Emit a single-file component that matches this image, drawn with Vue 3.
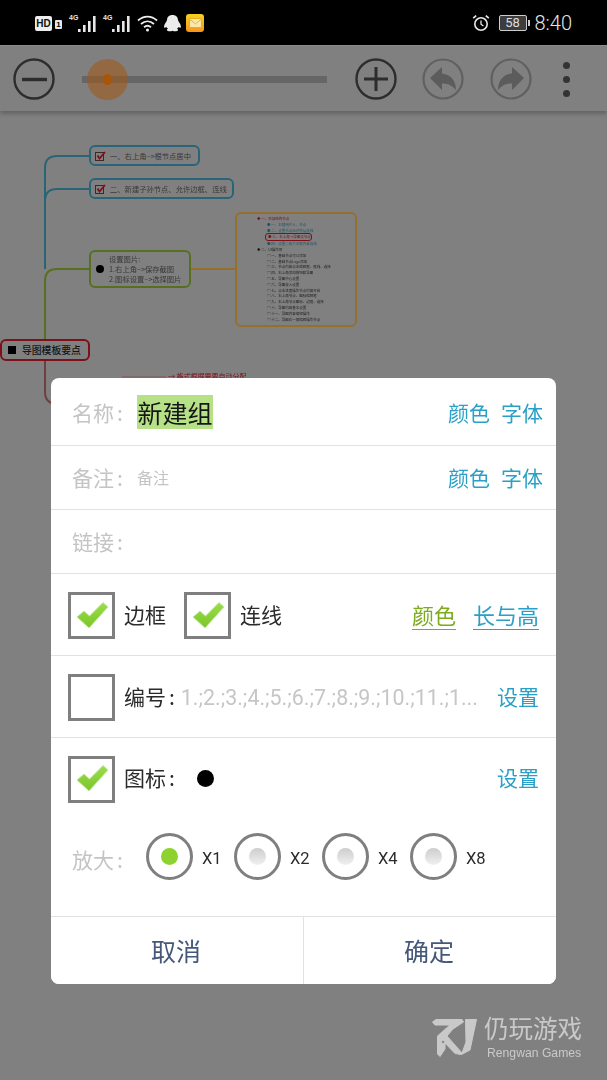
<template>
  <div class="screen">
    <div class="statusbar">
      <div class="status-left">
        <span class="hd">HD</span>
        <span class="sim">1</span>
        <span v-for="n in 2" :key="n" class="signal">
          <i class="net">4G</i>
          <svg width="20" height="16" viewBox="0 0 20 16" fill="#e8e8e8">
            <rect x="0" y="13" width="2.6" height="3" />
            <rect x="5" y="9" width="2.6" height="7" />
            <rect x="10" y="5" width="2.6" height="11" />
            <rect x="15" y="0" width="2.6" height="16" />
          </svg>
        </span>
        <svg class="wifi" width="21" height="18" viewBox="0 0 21 18" fill="none" stroke="#eee" stroke-width="1.8">
          <path d="M1 6.5C6.5 1.2 14.5 1.2 20 6.5" />
          <path d="M4 10C8 6.5 13 6.5 17 10" />
          <path d="M7 13.2C9 11.6 12 11.6 14 13.2" />
          <circle cx="10.5" cy="16" r="1.5" fill="#eee" stroke="none" />
        </svg>
        <svg class="qq" width="19" height="17" viewBox="0 0 15 19" preserveAspectRatio="none" fill="#ececec">
          <path d="M7.5 0C4.6 0 3.3 2.4 3.2 5.4C3.1 7.5 1 10 .8 13C.7 14.5 1.6 14.6 2.6 13.4C3 14.4 3.4 15 4 15.5C2.8 16 2.6 18 4.6 18.2C6 18.3 6.9 17.8 7.5 17.5C8.1 17.8 9 18.3 10.4 18.2C12.4 18 12.2 16 11 15.5C11.6 15 12 14.4 12.4 13.4C13.4 14.6 14.3 14.5 14.2 13C14 10 11.9 7.5 11.8 5.4C11.7 2.4 10.4 0 7.5 0Z" />
        </svg>
        <span class="mail">
          <svg width="13" height="10" viewBox="0 0 14 11" fill="#fbe9a8" stroke="#e9a21e" stroke-width=".9">
            <rect x=".5" y=".5" width="13" height="10" rx="1" />
            <path d="M1 1.5L7 6.5L13 1.5" fill="none" />
          </svg>
        </span>
      </div>
      <div class="status-right">
        <svg width="18" height="18" viewBox="0 0 18 18" fill="none" stroke="#e8e8e8" stroke-width="1.6">
          <circle cx="9" cy="10" r="6.2" />
          <path d="M9 6.5V10.2L11.4 12" stroke-width="1.3" />
          <path d="M1.2 4.2L4.2 1.6M16.8 4.2L13.8 1.6" />
        </svg>
        <span class="battery">58</span>
        <span class="battery-tip"></span>
        <span class="clock">8:40</span>
      </div>
    </div>

    <div class="toolbar">
      <svg class="round-btn" width="42" height="42" viewBox="0 0 42 42" fill="none" stroke="#2d2d2d" stroke-width="2.4">
        <circle cx="21" cy="21" r="19.5" />
        <path d="M9 21.5H34" stroke-width="3.4" />
      </svg>
      <div class="slider">
        <span class="thumb"><span class="thumb-dot"></span></span>
      </div>
      <svg class="round-btn" width="42" height="42" viewBox="0 0 42 42" fill="none" stroke="#2d2d2d" stroke-width="2.4">
        <circle cx="21" cy="21" r="19.5" />
        <path d="M9 21H33M21 9V33" stroke-width="3" />
      </svg>
      <svg class="round-btn undo" width="42" height="42" viewBox="0 0 42 42">
        <circle cx="21" cy="21" r="19.5" fill="none" stroke="#606060" stroke-width="2.2" />
        <path d="M8 20L20 9V15.5C29 16.5 34 23 34 32C30 27.5 26 25.5 20 25.5V32Z" fill="#5c5c5c" />
      </svg>
      <svg class="round-btn redo" width="42" height="42" viewBox="0 0 42 42">
        <circle cx="21" cy="21" r="19.5" fill="none" stroke="#606060" stroke-width="2.2" />
        <path d="M34 20L22 9V15.5C13 16.5 8 23 8 32C12 27.5 16 25.5 22 25.5V32Z" fill="#5c5c5c" />
      </svg>
      <div class="more"><i></i><i></i><i></i></div>
    </div>

    <div class="canvas">
      <svg class="links" width="607" height="970" viewBox="0 0 607 970" fill="none" stroke-width="2">
        <path d="M45 159V58Q45 46 57 46H90" stroke="#2a6478" />
        <path d="M45 91Q45 79 57 79H90" stroke="#2a6478" />
        <path d="M45 230V171Q45 159 57 159H90" stroke="#56701f" />
        <path d="M190 159H236" stroke="#94702c" />
        <path d="M45 250V282Q45 294 58 294H90" stroke="#6e3f3f" />
        <path d="M122 267H166" stroke="#7c5656" stroke-width="1" />
      </svg>

      <div class="node node-blue n1">
        <svg class="tick" width="11" height="10" viewBox="0 0 11 10" fill="none">
          <rect x=".5" y="1.5" width="8" height="8" stroke="#3c2a2a" />
          <path d="M2.5 4.5L4.5 7.5L10 1" stroke="#7d1019" stroke-width="1.8" />
        </svg>
        一、右上角–>根节点居中
      </div>
      <div class="node node-blue n2">
        <svg class="tick" width="11" height="10" viewBox="0 0 11 10" fill="none">
          <rect x=".5" y="1.5" width="8" height="8" stroke="#3c2a2a" />
          <path d="M2.5 4.5L4.5 7.5L10 1" stroke="#7d1019" stroke-width="1.8" />
        </svg>
        二、新建子孙节点、允许边框、连线
      </div>
      <div class="node node-green n3">
        <span class="bullet"></span>
        <div>设置图片:<br />1.右上角–>保存截图<br />2.图标设置–>选择图片</div>
      </div>
      <div class="node-orange">
        <div v-for="(line, i) in thumbLines" :key="i" class="thumb-line" :class="line.kind" :style="{ paddingLeft: line.indent + 'px' }">{{ line.text }}</div>
      </div>
      <div class="node node-red"><span class="square"></span>导图模板要点</div>
      <div class="cut-text">→ 格式根据需要自动分配</div>
    </div>

    <div class="dialog">
      <div class="row row-name">
        <span class="label">名称<i>:</i></span>
        <span class="name-input">新建组</span>
        <span class="links-right"><a>颜色</a><a>字体</a></span>
      </div>
      <div class="row row-note">
        <span class="label">备注<i>:</i></span>
        <span class="note-input">备注</span>
        <span class="links-right"><a>颜色</a><a>字体</a></span>
      </div>
      <div class="row row-note">
        <span class="label">链接<i>:</i></span>
      </div>
      <div class="row row-check">
        <span class="checkbox"><svg-check /></span>
        <span class="check-label">边框</span>
        <span class="checkbox second"><svg-check /></span>
        <span class="check-label">连线</span>
        <span class="under-links"><a class="green">颜色</a><a class="blue">长与高</a></span>
      </div>
      <div class="row row-check">
        <span class="checkbox"></span>
        <span class="check-label">编号<i>:</i></span>
        <span class="numbering">1.;2.;3.;4.;5.;6.;7.;8.;9.;10.;11.;1...</span>
        <a class="setting">设置</a>
      </div>
      <div class="icon-block">
        <div class="icon-row">
          <span class="checkbox"><svg-check /></span>
          <span class="check-label">图标<i>:</i></span>
          <span class="icon-dot"></span>
          <a class="setting">设置</a>
        </div>
        <div class="zoom-row">
          <span class="label">放大<i>:</i></span>
          <div class="radios">
            <span v-for="z in zooms" :key="z" class="radio-item">
              <span class="radio"><span class="radio-dot" :class="{ on: z === 'X1' }"></span></span>
              <span class="radio-text">{{ z }}</span>
            </span>
          </div>
        </div>
      </div>
      <div class="actions">
        <button class="action">取消</button>
        <button class="action">确定</button>
      </div>
    </div>

    <div class="watermark">
      <svg width="54" height="50" viewBox="0 0 54 50" fill="#c9c9c9" stroke="#c9c9c9" stroke-width="1" stroke-linejoin="round">
        <path fill-rule="evenodd" d="M4.5 10L8 7.5H34L35.5 10L25 17L19 24L34 41L33 42.5L27 41.5L17 31V37L12 44.5L9.5 42V24L22 13H7ZM15 28.5a1.5 1.5 0 1 0 .1 0Z" />
        <path d="M37.5 7.5H48.5L42 38L33.5 42.5L38 30Z" />
      </svg>
      <div class="wm-text">
        <span class="wm-cn">仍玩游戏</span>
        <span class="wm-en">Rengwan Games</span>
      </div>
    </div>
  </div>
</template>

<script setup>
import { h } from 'vue'

// the green tick used by all three checkboxes
const SvgCheck = () =>
  h('svg', { width: 34, height: 30, viewBox: '0 0 34 30', class: 'tick-icon' }, [
    h('defs', [
      h('linearGradient', { id: 'tickFill', x1: 0, y1: 0, x2: 0, y2: 1 }, [
        h('stop', { offset: 0, 'stop-color': '#9ade4a' }),
        h('stop', { offset: 1, 'stop-color': '#7cc52a' })
      ])
    ]),
    h('path', {
      d: 'M2 16L9 10L14.5 15L28 1.5L33 6L14 27Z',
      fill: 'url(#tickFill)',
      stroke: '#c4e7a8',
      'stroke-width': 1,
      'stroke-linejoin': 'round'
    })
  ])

const zooms = ['X1', 'X2', 'X4', 'X8']

const thumbLines = [
  { text: '◆ 一、目录结构节点', indent: 20, kind: 'red' },
  { text: '● 一、右键用户入、节点', indent: 30, kind: 'teal' },
  { text: '● 二、设置节点允许外层连线', indent: 30, kind: 'teal' },
  { text: '● 三、右上角→导图设节点', indent: 30, kind: 'red boxed' },
  { text: '● 四、设置二级文本框内容连线', indent: 30, kind: 'teal' },
  { text: '◆ 二、UI操作项', indent: 20, kind: 'dark' },
  { text: '▤ 一、基础节点可以添加', indent: 30, kind: 'dark' },
  { text: '▤ 二、基础节点Logo添加', indent: 30, kind: 'dark' },
  { text: '▤ 三、节点内容点击编辑框、框线、选择', indent: 30, kind: 'dark' },
  { text: '▤ 四、右上角添加按钮和导图', indent: 30, kind: 'dark' },
  { text: '▤ 五、导图中心设置', indent: 30, kind: 'dark' },
  { text: '▤ 六、导图收入设置', indent: 30, kind: 'dark' },
  { text: '▤ 七、点击进度操作节点内容开启', indent: 30, kind: 'dark' },
  { text: '▤ 八、右上角节点、图标编辑框', indent: 30, kind: 'dark' },
  { text: '▤ 九、右上角节点图标、边框、选择', indent: 30, kind: 'dark' },
  { text: '▤ 十、导图内容基本设置', indent: 30, kind: 'dark' },
  { text: '▤ 十一、导图内容编辑操作', indent: 30, kind: 'dark' },
  { text: '▤ 十二、导图右一键编辑操作节点', indent: 30, kind: 'dark' }
]
</script>

<style>
html,
body {
  margin: 0;
  background: #808080;
}
</style>

<style scoped>
* {
  box-sizing: border-box;
}

.screen {
  position: relative;
  width: 607px;
  height: 1080px;
  overflow: hidden;
  background: #808080;
  font-family: "Noto Sans CJK SC", "Noto Sans", sans-serif;
}

/* status bar */
.statusbar {
  height: 45px;
  background: #000;
  display: flex;
  justify-content: space-between;
  align-items: center;
  padding: 1px 35px 0;
  color: #e8e8e8;
}

.status-left,
.status-right {
  display: flex;
  align-items: center;
}

.hd {
  width: 17px;
  height: 15px;
  background: #eee;
  border-radius: 2px;
  color: #111;
  font: 700 10px/15px "Liberation Sans", sans-serif;
  text-align: center;
}

.sim {
  width: 7px;
  height: 9px;
  margin: 3px 7px 0 3px;
  background: #e8e8e8;
  border-radius: 1px;
  color: #000;
  font: 700 8px/9px "Liberation Sans", sans-serif;
  text-align: center;
}

.signal {
  display: flex;
  position: relative;
  width: 34px;
  height: 18px;
  padding: 2px 0 0 9px;
  align-items: flex-end;
}

.net {
  position: absolute;
  left: 0;
  top: 0;
  font: 700 7px/8px "Liberation Sans", sans-serif;
}

.qq {
  margin-left: 5px;
}

.mail {
  width: 18px;
  height: 18px;
  margin-left: 4px;
  border-radius: 3px;
  background: linear-gradient(#f3d31f, #f7941d);
  display: flex;
  align-items: center;
  justify-content: center;
}

.status-right svg {
  margin-right: 9px;
}

.battery {
  width: 28px;
  height: 16px;
  border: 1px solid #ccc;
  border-radius: 2px;
  background: #3d3d3d;
  color: #ddd;
  font: 400 13px/14px Roboto, sans-serif;
  text-align: center;
}

.battery-tip {
  width: 2px;
  height: 6px;
  margin-left: 1px;
  background: #ccc;
}

.clock {
  margin-left: 5px;
  font: 300 20px/24px Roboto, sans-serif;
  color: #e6e6e6;
}

/* toolbar */
.toolbar {
  height: 66px;
  background: #808080;
  border-top: 1px solid #8c8c8c;
  box-shadow: 0 3px 4px rgba(0, 0, 0, 0.22);
  display: flex;
  align-items: center;
  padding: 1px 0 0 13px;
  position: relative;
}

.round-btn {
  flex: none;
}

.slider {
  position: relative;
  width: 245px;
  height: 7px;
  margin: 0 28px 0 27px;
  background: #666;
}

.thumb {
  position: absolute;
  left: 5px;
  top: -17px;
  width: 41px;
  height: 41px;
  border-radius: 50%;
  background: rgba(160, 88, 22, 0.58);
  display: flex;
  align-items: center;
  justify-content: center;
}

.thumb-dot {
  width: 9px;
  height: 11px;
  border-radius: 50%;
  background: #a8560c;
}

.undo {
  margin-left: 25px;
}

.redo {
  margin-left: 26px;
}

.more {
  display: flex;
  flex-direction: column;
  gap: 7px;
  margin-left: 31px;
}

.more i {
  width: 7px;
  height: 7px;
  border-radius: 50%;
  background: #333;
}

/* mind map behind the dialog */
.canvas {
  position: absolute;
  left: 0;
  top: 110px;
  width: 607px;
  height: 970px;
  filter: blur(0.5px);
}

.links {
  position: absolute;
  left: 0;
  top: 0;
}

.node {
  position: absolute;
  display: flex;
  align-items: center;
  border: 2px solid;
  border-radius: 6px;
  background: #808080;
  color: #383838;
  font-size: 7.3px;
  white-space: nowrap;
}

.node-blue {
  border-color: #2a6478;
  height: 21px;
}

.n1 {
  left: 89px;
  top: 35px;
  width: 111px;
}

.n2 {
  left: 89px;
  top: 68px;
  width: 145px;
}

.tick {
  margin: 0 4px 0 4px;
  flex: none;
}

.node-green {
  left: 89px;
  top: 140px;
  width: 102px;
  height: 38px;
  border-color: #56701f;
  line-height: 10px;
}

.bullet {
  flex: none;
  width: 8px;
  height: 8px;
  margin: 0 5px;
  border-radius: 50%;
  background: #000;
}

.node-orange {
  position: absolute;
  left: 235px;
  top: 102px;
  width: 122px;
  height: 115px;
  padding: 2px 0 0;
  border: 2px solid #94702c;
  border-radius: 6px;
  background: #808080;
}

.thumb-line {
  height: 5.8px;
  font-size: 3.5px;
  line-height: 5.8px;
  white-space: nowrap;
}

.thumb-line.red {
  color: #7d1019;
}

.thumb-line.teal {
  color: #1e5566;
}

.thumb-line.dark {
  color: #222;
}

.thumb-line.boxed {
  width: 45px;
  margin: 1px 0 1px 29px;
  padding-left: 2px !important;
  outline: 1px solid #7d1019;
  border-radius: 2px;
}

.node-red {
  left: 0;
  top: 229px;
  width: 90px;
  height: 22px;
  border-color: #7d1019;
  font-size: 9.8px;
  font-weight: 500;
  color: #151515;
}

.square {
  width: 8px;
  height: 8px;
  margin: 0 6px 0 6px;
  background: #000;
}

.cut-text {
  position: absolute;
  left: 168px;
  top: 261px;
  color: #7d1019;
  font-size: 7px;
  line-height: 10px;
}

/* dialog */
.dialog {
  position: absolute;
  left: 51px;
  top: 378px;
  width: 505px;
  height: 606px;
  background: #fff;
  border-radius: 8px;
  display: flex;
  flex-direction: column;
  overflow: hidden;
}

.row {
  display: flex;
  align-items: center;
  border-bottom: 1px solid #e2e2e2;
  flex: none;
}

.row-name {
  height: 68px;
  padding: 0 13px 0 21px;
}

.row-note {
  height: 64px;
  padding: 0 13px 2px 21px;
}

.row-check {
  height: 82px;
  padding: 2px 17px 0;
}

.label {
  width: 65px;
  flex: none;
  color: #c4c4c4;
  font-size: 21px;
}

.label i,
.check-label i {
  margin-left: 3px;
  font-style: normal;
}

.name-input {
  height: 34px;
  width: 76px;
  padding-left: 0.5px;
  background: #b7e187;
  color: #161616;
  font-size: 25px;
  line-height: 34px;
  white-space: nowrap;
}

.note-input {
  color: #c4c4c4;
  font-size: 16px;
}

.links-right {
  margin-left: auto;
  display: flex;
  gap: 11px;
  color: #2aa0c6;
  font-size: 21px;
}

.checkbox {
  flex: none;
  width: 47px;
  height: 47px;
  border: 3px solid #7f7f7f;
  display: flex;
  align-items: center;
  justify-content: center;
  background: #fff;
}

.tick-icon {
  display: block;
}

.second {
  margin-left: 18px;
}

.check-label {
  margin: -4px 0 0 9px;
  color: #2b2b2b;
  font-size: 21px;
  white-space: nowrap;
}

.under-links {
  margin: -2px 0 0 auto;
  display: flex;
  gap: 17px;
  font-size: 22px;
  line-height: 29px;
}

.under-links a {
  border-bottom: 1px solid;
}

.green {
  color: #7dab1e;
  border-color: #b8d080;
}

.blue {
  color: #2aa0c6;
  border-color: #80c6de;
}

.numbering {
  margin-left: 6px;
  color: #c6c6c6;
  font: 400 21.4px/26px Roboto, sans-serif;
  white-space: nowrap;
}

.setting {
  margin: -4px 0 0 auto;
  color: #2aa0c6;
  font-size: 21px;
  white-space: nowrap;
}

.icon-block {
  flex: 1;
  border-bottom: 1px solid #e2e2e2;
}

.icon-row {
  height: 82px;
  display: flex;
  align-items: center;
  padding: 0 17px;
}

.icon-dot {
  width: 17px;
  height: 17px;
  margin: -1px 0 0 22px;
  border-radius: 50%;
  background: #000;
}

.zoom-row {
  display: flex;
  align-items: center;
  padding-left: 21px;
  height: 52px;
  margin-top: 10px;
}

.zoom-row .label {
  width: 74px;
  padding-top: 5px;
}

.radios {
  display: flex;
  gap: 12px;
}

.radio-item {
  display: flex;
  align-items: center;
  gap: 9px;
}

.radio {
  width: 47px;
  height: 47px;
  border: 3px solid #7f7f7f;
  border-radius: 50%;
  display: flex;
  align-items: center;
  justify-content: center;
}

.radio-dot {
  width: 17px;
  height: 17px;
  border-radius: 50%;
  background: linear-gradient(#cdcdcd, #f0f0f0);
}

.radio-dot.on {
  background: #8ed22f;
}

.radio-text {
  width: 20px;
  padding-top: 6px;
  color: #2b2b2b;
  font: 400 16.5px/20px Roboto, sans-serif;
}

.actions {
  height: 67px;
  display: flex;
  flex: none;
}

.action {
  flex: 1;
  border: 0;
  background: #fff;
  color: #46587a;
  font-family: inherit;
  font-size: 25px;
  padding: 0 2px 2px 0;
}

.action + .action {
  border-left: 1px solid #e2e2e2;
}

/* watermark */
.watermark {
  position: absolute;
  left: 428px;
  top: 1012px;
  display: flex;
  gap: 2px;
  color: #c9c9c9;
}

.wm-text {
  display: flex;
  flex-direction: column;
  padding-top: 3px;
}

.wm-cn {
  font-size: 24.5px;
  line-height: 26px;
}

.wm-en {
  margin-top: 4px;
  padding-left: 3px;
  font: 400 12.2px/16px "Liberation Sans", sans-serif;
}
</style>
